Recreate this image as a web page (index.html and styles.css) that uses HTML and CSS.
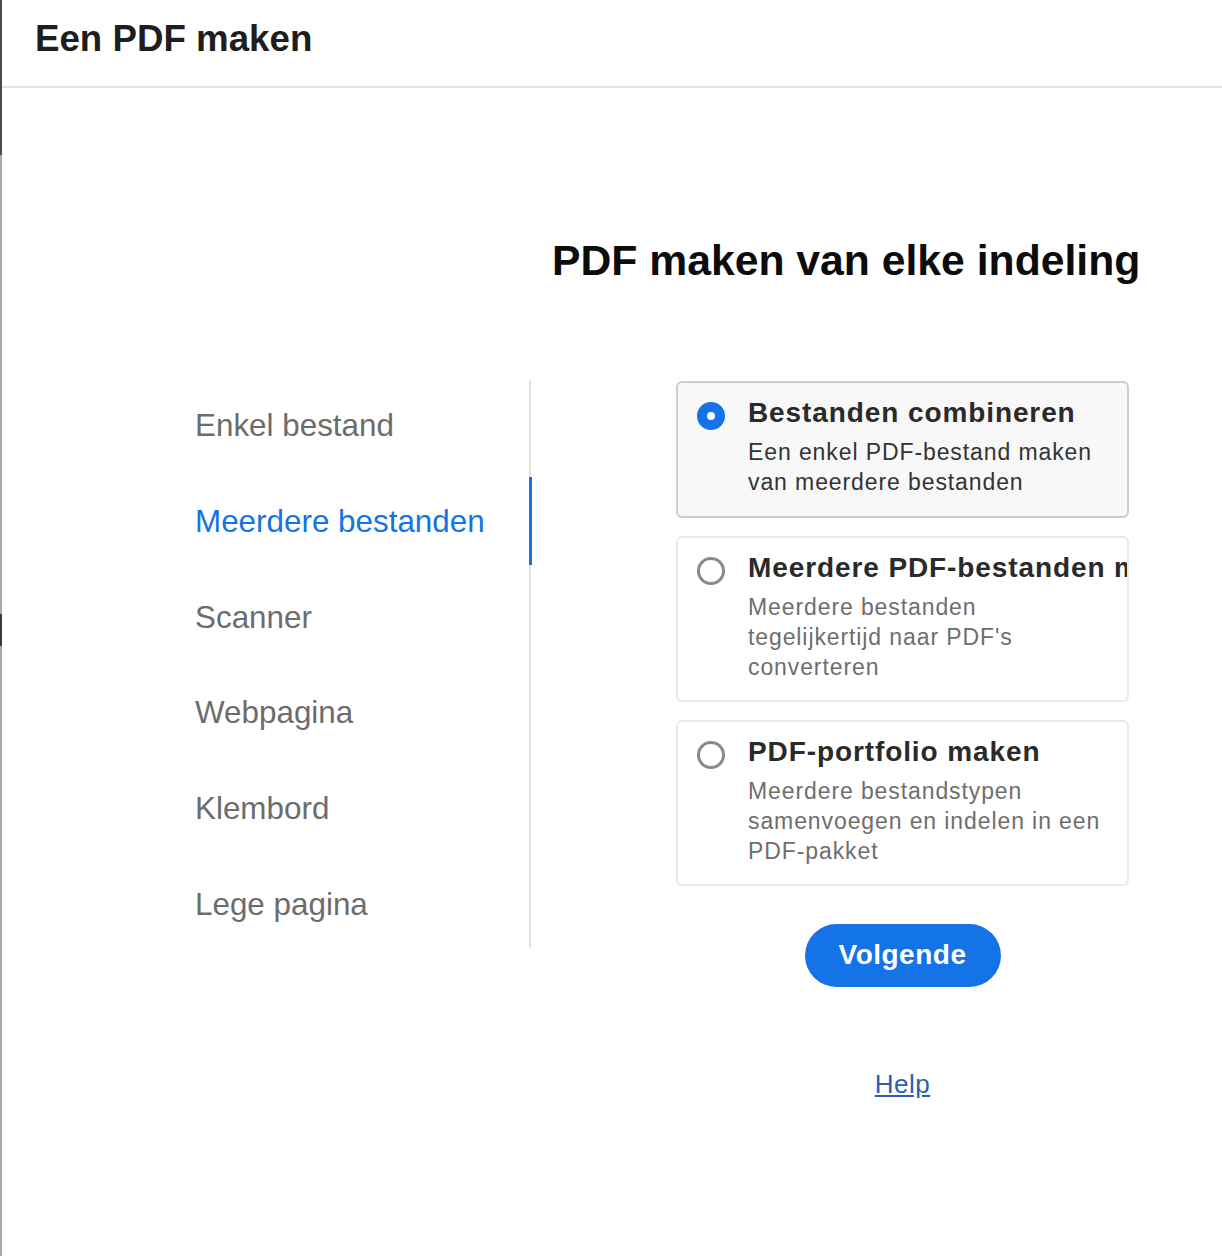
FILE: index.html
```html
<!DOCTYPE html>
<html lang="nl">
<head>
<meta charset="utf-8">
<title>Een PDF maken</title>
<link rel="stylesheet" href="styles.css">
</head>
<body>
<div class="frame">
  <header class="header">
    <h1 class="header-title">Een PDF maken</h1>
  </header>
  <main class="content">
    <h2 class="heading">PDF maken van elke indeling</h2>
    <div class="columns">
      <ul class="nav">
        <li class="nav-item">Enkel bestand</li>
        <li class="nav-item active">Meerdere bestanden</li>
        <li class="nav-item">Scanner</li>
        <li class="nav-item">Webpagina</li>
        <li class="nav-item">Klembord</li>
        <li class="nav-item">Lege pagina</li>
      </ul>
      <div class="options">
        <div class="card selected">
          <span class="radio on"></span>
          <div class="card-text">
            <div class="card-title">Bestanden combineren</div>
            <div class="card-desc">Een enkel PDF-bestand maken van meerdere bestanden</div>
          </div>
        </div>
        <div class="card">
          <span class="radio"></span>
          <div class="card-text">
            <div class="card-title">Meerdere PDF-bestanden maken</div>
            <div class="card-desc">Meerdere bestanden tegelijkertijd naar PDF's converteren</div>
          </div>
        </div>
        <div class="card">
          <span class="radio"></span>
          <div class="card-text">
            <div class="card-title">PDF-portfolio maken</div>
            <div class="card-desc">Meerdere bestandstypen samenvoegen en indelen in een PDF-pakket</div>
          </div>
        </div>
        <button class="next-btn">Volgende</button>
        <a class="help" href="#">Help</a>
      </div>
    </div>
  </main>
</div>
</body>
</html>
```

FILE: styles.css
```css
* { box-sizing: border-box; }

html, body {
  margin: 0;
  padding: 0;
  background: #ffffff;
}

body {
  font-family: "Liberation Sans", Arial, sans-serif;
}

.frame {
  min-height: 1256px;
  padding-left: 2px;
  background-image: linear-gradient(to bottom, #4a4a4a 0, #4a4a4a 155px, #a9a9a9 155px, #a9a9a9 614px, #3c3c3c 614px, #3c3c3c 646px, #a9a9a9 646px);
  background-size: 2px 100%;
  background-repeat: no-repeat;
}

.header {
  height: 88px;
  padding: 17px 0 0 33px;
  border-bottom: 2px solid #e2e2e2;
}

.header-title {
  margin: 0;
  font-size: 36.7px;
  line-height: 44px;
  font-weight: bold;
  color: #1e1e1e;
}

.content {
  display: flex;
  flex-direction: column;
}

.heading {
  margin: 147px 0 0 550px;
  font-size: 42.7px;
  line-height: 50px;
  font-weight: bold;
  color: #0c0c0c;
}

.columns {
  display: flex;
  margin-top: 95px;
  padding-left: 193px;
}

.nav {
  list-style: none;
  margin: 0;
  padding: 3px 0 0;
  width: 336px;
  height: 568px;
  border-right: 2px solid #e4e4e4;
  display: flex;
  flex-direction: column;
  gap: 10px;
}

.nav-item {
  position: relative;
  height: 86px;
  display: flex;
  align-items: center;
  font-size: 31.4px;
  color: #6c6c6c;
}

.nav-item.active {
  color: #1473e6;
}

.nav-item.active::after {
  content: "";
  position: absolute;
  right: -3px;
  top: -2px;
  bottom: 0;
  width: 3px;
  background: #1473e6;
}

.options {
  margin-left: 145px;
  width: 453px;
  display: flex;
  flex-direction: column;
  align-items: center;
  gap: 18px;
  padding-top: 1px;
}

.card {
  width: 453px;
  display: flex;
  align-items: flex-start;
  gap: 23px;
  padding: 13px 19px 18px 19px;
  border: 2px solid #e8e8e8;
  border-radius: 6px;
  background: #ffffff;
  overflow: hidden;
}

.card.selected {
  padding-bottom: 19px;
  background: #f8f8f8;
  border-color: #cdcdcd;
}

.radio {
  flex: none;
  width: 28px;
  height: 28px;
  margin-top: 6px;
  border-radius: 50%;
  border: 3px solid #8a8a8a;
  background: #ffffff;
}

.radio.on {
  border: 10px solid #1473e6;
  background: #ffffff;
}

.card-text {
  min-width: 0;
  flex: 1;
}

.card-title {
  font-size: 28px;
  line-height: 34px;
  font-weight: bold;
  letter-spacing: 0.9px;
  color: #2a2a2a;
  white-space: nowrap;
}

.card-desc {
  margin-top: 7px;
  font-size: 23px;
  line-height: 30px;
  letter-spacing: 0.9px;
  color: #6e6e6e;
  padding-right: 6px;
}

.card.selected .card-desc {
  color: #333333;
}

.next-btn {
  margin-top: 20px;
  width: 196px;
  height: 63px;
  border: none;
  border-radius: 32px;
  background: #1473e6;
  color: #ffffff;
  font-family: "Liberation Sans", Arial, sans-serif;
  font-size: 28px;
  font-weight: bold;
  letter-spacing: 0.5px;
  padding: 0 0 2px;
}

.help {
  margin-top: 63px;
  font-size: 26px;
  line-height: 32px;
  letter-spacing: 0.5px;
  color: #2b5db5;
  text-decoration: underline;
}
```
